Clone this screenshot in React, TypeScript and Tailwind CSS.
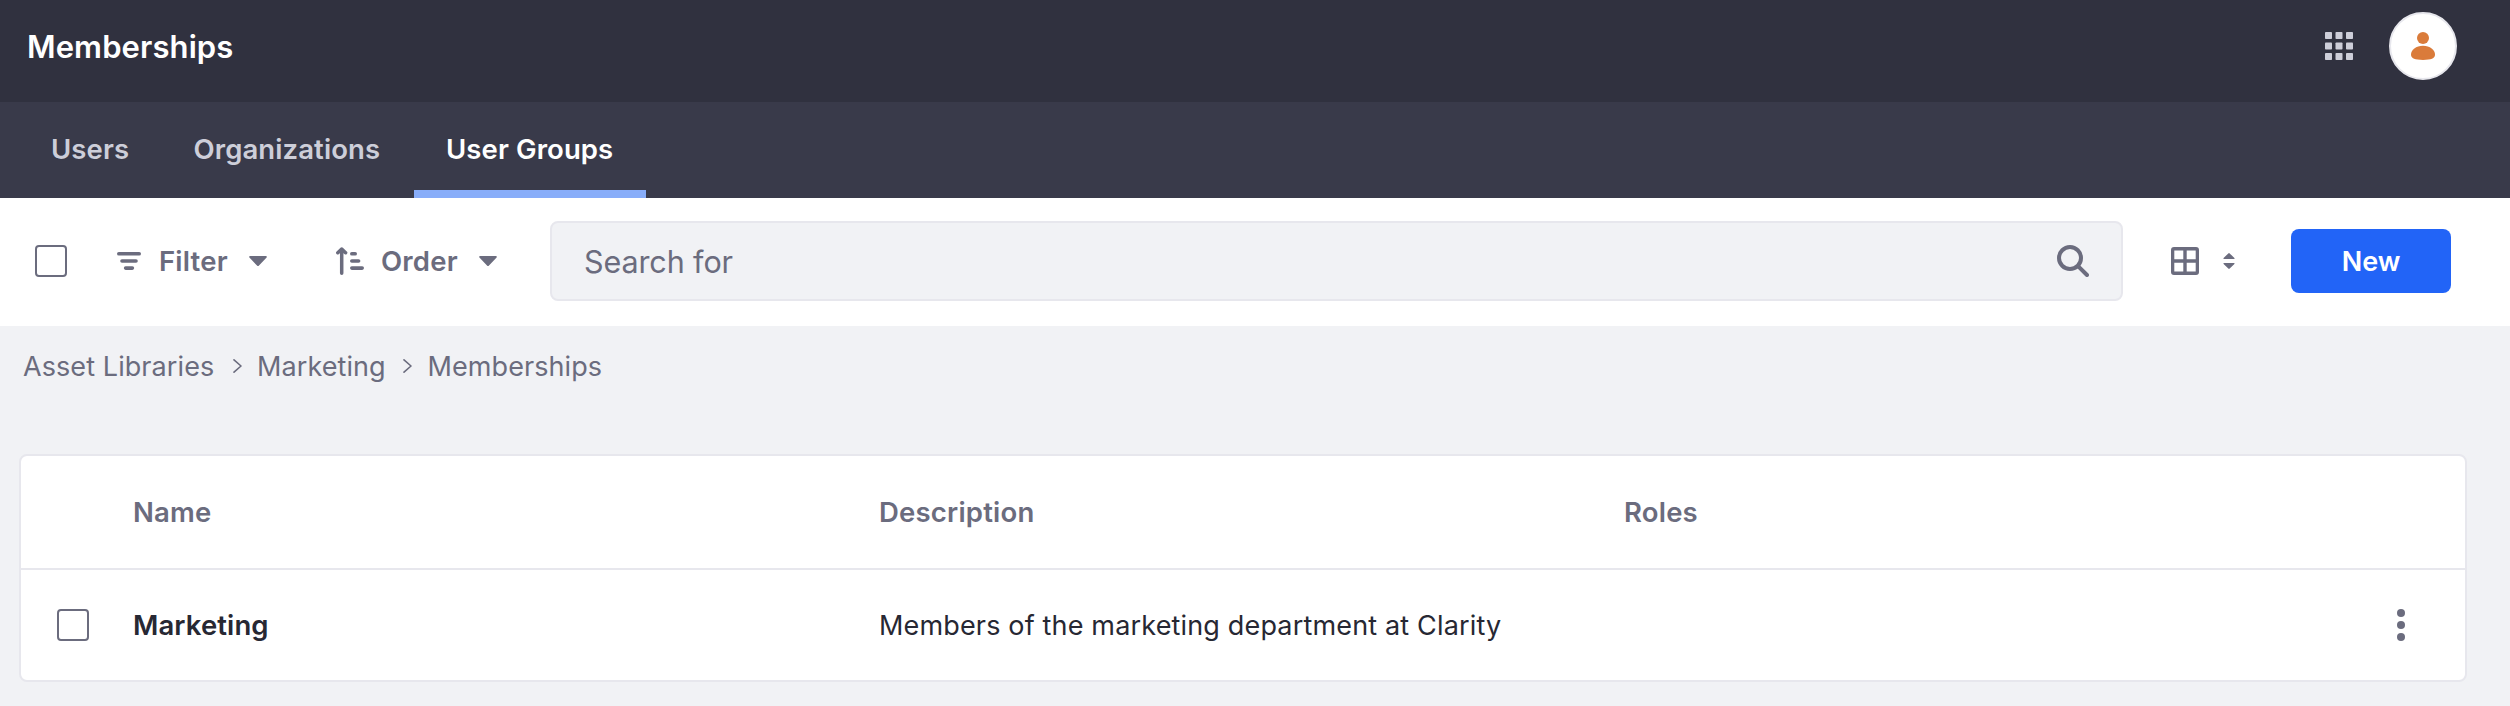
import type { ReactNode } from "react";

function Caret() {
  return (
    <svg className="h-[12px] w-[18px] shrink-0" viewBox="0 0 18 12" fill="currentColor">
      <path d="M1 1h16a.9.9 0 0 1 .6 1.5L10 10.6a1.4 1.4 0 0 1-2 0L.4 2.5A.9.9 0 0 1 1 1z" />
    </svg>
  );
}

function FilterIcon() {
  return (
    <svg className="h-[28px] w-[24px] shrink-0" viewBox="0 0 24 28" fill="currentColor">
      <rect x="0" y="5" width="24" height="3.6" rx="1.8" />
      <rect x="3.2" y="12.2" width="17.6" height="3.6" rx="1.8" />
      <rect x="6.8" y="19.3" width="10.4" height="3.6" rx="1.8" />
    </svg>
  );
}

function OrderIcon() {
  return (
    <svg className="h-[28px] w-[28px] shrink-0" viewBox="0 0 28 28" fill="currentColor">
      <path
        d="M5.7 2v24.2M1.8 5.7l3.9-3.6 3.9 3.6"
        fill="none"
        stroke="currentColor"
        strokeWidth="3.5"
        strokeLinecap="round"
        strokeLinejoin="round"
      />
      <rect x="14" y="5" width="7" height="3.6" rx="1.8" />
      <rect x="14" y="12.2" width="10.4" height="3.6" rx="1.8" />
      <rect x="14" y="19.3" width="14" height="3.6" rx="1.8" />
    </svg>
  );
}

function SearchIcon() {
  return (
    <svg className="h-[32px] w-[32px] shrink-0" viewBox="0 0 32 32" fill="none" stroke="currentColor" strokeWidth="4">
      <circle cx="13" cy="13" r="11" />
      <path d="M21.3 21.3l8.7 8.7" strokeLinecap="round" />
    </svg>
  );
}

function TableIcon() {
  return (
    <svg className="h-[28px] w-[28px] shrink-0" viewBox="0 0 28 28" fill="currentColor" fillRule="evenodd">
      <path d="M3 0h22a3 3 0 0 1 3 3v22a3 3 0 0 1-3 3H3a3 3 0 0 1-3-3V3a3 3 0 0 1 3-3zM3.3 3.5v8.8h9V3.5zM15.7 3.5v8.8h9V3.5zM3.3 15.7v8.8h9v-8.8zM15.7 15.7v8.8h9v-8.8z" />
    </svg>
  );
}

function SortIcon() {
  return (
    <svg className="h-[16px] w-[12px] shrink-0" viewBox="0 0 12 16" fill="currentColor">
      <path d="M5.3.4a1 1 0 0 1 1.4 0l4.7 4.7a.6.6 0 0 1-.4 1H1a.6.6 0 0 1-.4-1zM5.3 15.6a1 1 0 0 0 1.4 0l4.7-4.7a.6.6 0 0 0-.4-1H1a.6.6 0 0 0-.4 1z" />
    </svg>
  );
}

function AppsIcon() {
  return (
    <svg className="h-[28px] w-[28px] shrink-0 text-[#cdced9]" viewBox="0 0 28 28" fill="currentColor">
      {[0, 10.5, 21].map((y) =>
        [0, 10.5, 21].map((x) => <rect key={`${x}-${y}`} x={x} y={y} width="7" height="7" rx="0.8" />),
      )}
    </svg>
  );
}

function UserIcon() {
  return (
    <svg className="h-[28px] w-[24px] text-[#da7b3a]" viewBox="0 0 24 28" fill="currentColor">
      <circle cx="12" cy="6" r="6" />
      <path d="M12 13.8c7 0 12 4.2 12 8.8 0 4-4 5.4-12 5.4S0 26.6 0 22.6c0-4.6 5-8.8 12-8.8z" />
    </svg>
  );
}

function Chevron() {
  return (
    <svg
      className="h-[14px] w-[9px] shrink-0"
      viewBox="0 0 9 14"
      fill="none"
      stroke="currentColor"
      strokeWidth="1.6"
      strokeLinecap="round"
      strokeLinejoin="round"
    >
      <path d="M1 .9L8 7l-7 6.1" />
    </svg>
  );
}

function Checkbox() {
  return <span className="block size-8 shrink-0 rounded-[4px] border-2 border-[#6b6c7e] bg-white" />;
}

function Tab({ active, className, children }: { active?: boolean; className: string; children: ReactNode }) {
  return (
    <a
      className={`flex items-center whitespace-nowrap border-b-8 pt-[6px] ${
        active ? "border-[#88adf9] text-white" : "border-transparent text-[#cdced9]"
      } ${className}`}
    >
      {children}
    </a>
  );
}

export default function App() {
  return (
    <div className="h-[706px] w-[2510px] overflow-hidden bg-[#f1f2f5] font-[Inter,sans-serif] text-[27.5px] leading-[36px] text-[#6b6c7e]">
      <header className="flex h-[102px] items-center bg-[#30313f] pr-[53px] pb-2.5 pl-[27px]">
        <h1 className="flex-1 pt-px text-[31px] font-semibold tracking-[0.1px] text-white">Memberships</h1>
        <AppsIcon />
        <div className="ml-9 flex size-[68px] items-center justify-center rounded-full border-2 border-[#e7e7ed] bg-white">
          <UserIcon />
        </div>
      </header>

      <nav className="flex h-24 bg-[#393a4a] pl-[18px] font-semibold tracking-[0.1px]">
        <Tab className="w-[143px] pl-[33px]">Users</Tab>
        <Tab className="w-[253px] pl-[32.5px]">Organizations</Tab>
        <Tab active className="w-[232px] pl-[32px]">User Groups</Tab>
      </nav>

      <div className="flex h-32 items-center bg-white pr-[59px] pb-0.5 pl-[35px]">
        <Checkbox />
        <button className="ml-[50px] flex w-[150px] items-center font-semibold tracking-[0.2px]">
          <FilterIcon />
          <span className="ml-[18px] flex-1 text-left">Filter</span>
          <Caret />
        </button>
        <button className="ml-[69px] flex w-[161px] items-center font-semibold tracking-[0.2px]">
          <OrderIcon />
          <span className="ml-[17px] flex-1 text-left">Order</span>
          <Caret />
        </button>
        <div className="ml-[53px] flex h-20 flex-1 items-center rounded-lg border-2 border-[#e7e7ed] bg-[#f1f2f5] px-8">
          <span className="flex-1 pt-px text-[30.5px] tracking-[-0.1px]">Search for</span>
          <SearchIcon />
        </div>
        <div className="ml-12 flex items-center gap-6">
          <TableIcon />
          <SortIcon />
        </div>
        <button className="ml-14 flex h-16 w-40 items-center justify-center rounded-lg bg-[#2264f7] pt-0.5 text-[27px] font-semibold text-white">
          New
        </button>
      </div>

      <div className="flex h-20 items-center pl-[23px] text-[27px] tracking-[0.08px]">
        <span className="w-[209.5px] pt-0.5">Asset Libraries</span>
        <Chevron />
        <span className="ml-[15.5px] w-[145.5px] pt-0.5">Marketing</span>
        <Chevron />
        <span className="ml-[16px] pt-0.5">Memberships</span>
      </div>

      <div className="mt-12 ml-[19px] w-[2448px] rounded-lg border-2 border-[#e7e7ed] bg-white">
        <div className="grid h-[114px] grid-cols-[112px_746px_745px_1fr] items-center border-b-2 border-[#e7e7ed] font-semibold tracking-[0.2px]">
          <span />
          <span>Name</span>
          <span>Description</span>
          <span>Roles</span>
        </div>
        <div className="grid h-[110px] grid-cols-[112px_746px_745px_1fr] items-center text-[#272833]">
          <div className="pl-9">
            <Checkbox />
          </div>
          <span className="font-semibold tracking-[0.1px]">Marketing</span>
          <span className="pt-0.5 text-[27px] tracking-[0.16px] whitespace-nowrap">
            Members of the marketing department at Clarity
          </span>
          <div className="flex justify-end pr-[60px] text-[#6b6c7e]">
            <svg className="h-[32px] w-[8px]" viewBox="0 0 8 32" fill="currentColor">
              <circle cx="4" cy="4" r="4" />
              <circle cx="4" cy="16" r="4" />
              <circle cx="4" cy="28" r="4" />
            </svg>
          </div>
        </div>
      </div>
    </div>
  );
}
